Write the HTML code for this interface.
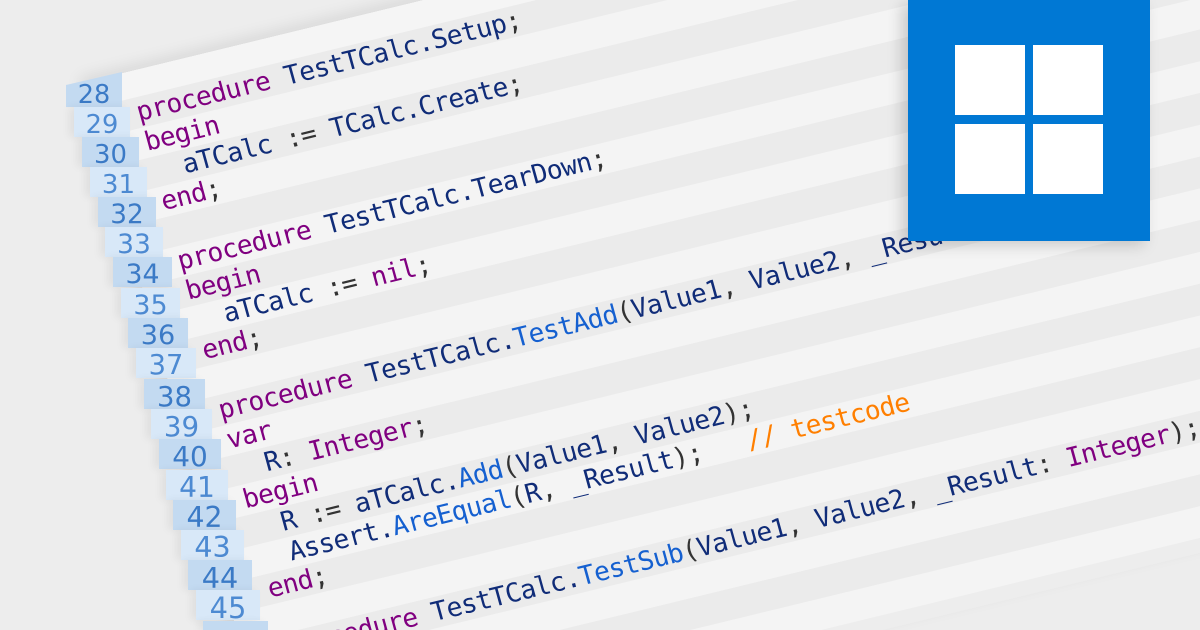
<!DOCTYPE html>
<html><head><meta charset="utf-8"><style>
html,body{margin:0;padding:0;width:1200px;height:630px;overflow:hidden}
body{background:#ededed;position:relative;font-family:"DejaVu Sans Mono","Liberation Mono",monospace}
#panel{position:absolute;left:0;top:0;width:1600px;height:700px;transform-origin:0 0;transform:matrix(1,-0.243,0.273,0.993,132.9,98.1)}
#stripes{position:absolute;left:-40px;top:-26px;width:1600px;height:700px;overflow:hidden;box-shadow:-6px -6px 14px rgba(0,0,0,0.08)}
#stripes div{height:30px;background:#f4f4f4}
#stripes div.d{background:#ebebeb}
#stripes div.t{height:26px;background:#f5f5f5}
#code{position:absolute;left:0;top:0;font-size:25.5px;letter-spacing:-0.6px;line-height:30px;white-space:pre;color:#102c78}
.k{color:#800080}.m{color:#1560d0}.p{color:#333}.c{color:#ff7f00}
.g{position:absolute;height:30.3px;box-sizing:border-box;padding-top:3px;font-family:"DejaVu Sans",sans-serif;line-height:30px;text-align:center;color:#3b7ac6;box-shadow:-5px 0 8px rgba(0,0,0,0.06)}
.g.a{background:#c3daf1}.g.b{background:#d8e8f8;color:#4d8ad2}
#win{position:absolute;left:908px;top:0;width:242px;height:241px;background:#0078d4;box-shadow:-6px 4px 14px rgba(0,0,0,0.18)}
#win i{position:absolute;width:70px;height:70px;background:#fff}
</style></head><body>
<div id="panel">
<div id="stripes">
<div class="t"></div>
<div class="d"></div><div></div><div class="d"></div><div></div><div class="d"></div><div></div><div class="d"></div><div></div><div class="d"></div><div></div><div class="d"></div><div></div><div class="d"></div><div></div><div class="d"></div><div></div><div class="d"></div><div></div><div class="d"></div><div></div><div class="d"></div><div></div>
</div>
<div id="code"><span class="k">procedure</span> TestTCalc.Setup<span class="p">;</span>
<span class="k">begin</span>
  aTCalc <span class="p">:=</span> TCalc.Create<span class="p">;</span>
<span class="k">end</span><span class="p">;</span>

<span class="k">procedure</span> TestTCalc.TearDown<span class="p">;</span>
<span class="k">begin</span>
  aTCalc <span class="p">:=</span> <span class="k">nil</span><span class="p">;</span>
<span class="k">end</span><span class="p">;</span>

<span class="k">procedure</span> TestTCalc.<span class="m">TestAdd</span><span class="p">(</span>Value1<span class="p">,</span> Value2<span class="p">,</span> _Result<span class="p">:</span> <span class="k">Integer</span><span class="p">);</span>
<span class="k">var</span>
  R<span class="p">:</span> <span class="k">Integer</span><span class="p">;</span>
<span class="k">begin</span>
  R <span class="p">:=</span> aTCalc.<span class="m">Add</span><span class="p">(</span>Value1<span class="p">,</span> Value2<span class="p">);</span>
  Assert.<span class="m">AreEqual</span><span class="p">(</span>R<span class="p">,</span> _Result<span class="p">);</span>   <span class="c">// testcode</span>
<span class="k">end</span><span class="p">;</span>

<span class="k">procedure</span> TestTCalc.<span class="m">TestSub</span><span class="p">(</span>Value1<span class="p">,</span> Value2<span class="p">,</span> _Result<span class="p">:</span> <span class="k">Integer</span><span class="p">);</span></div>
</div>
<div class="g a" style="left:66px;top:72px;height:35.3px;padding-top:8px;width:56px;font-size:25.5px;clip-path:polygon(0 13px,100% 0,100% 100%,0 100%)">28</div>
<div class="g b" style="left:74px;top:107px;width:56px;font-size:25.7px">29</div>
<div class="g a" style="left:82px;top:137px;width:57px;font-size:25.9px">30</div>
<div class="g b" style="left:90px;top:167px;width:57px;font-size:26.1px">31</div>
<div class="g a" style="left:98px;top:197px;width:58px;font-size:26.3px">32</div>
<div class="g b" style="left:105px;top:227px;width:58px;font-size:26.5px">33</div>
<div class="g a" style="left:113px;top:257px;width:59px;font-size:26.7px">34</div>
<div class="g b" style="left:121px;top:288px;width:59px;font-size:26.9px">35</div>
<div class="g a" style="left:128px;top:318px;width:60px;font-size:27.1px">36</div>
<div class="g b" style="left:136px;top:348px;width:60px;font-size:27.3px">37</div>
<div class="g a" style="left:144px;top:379px;width:61px;font-size:27.5px">38</div>
<div class="g b" style="left:151px;top:409px;width:61px;font-size:27.7px">39</div>
<div class="g a" style="left:159px;top:439px;width:62px;font-size:27.9px">40</div>
<div class="g b" style="left:166px;top:470px;width:62px;font-size:28.1px">41</div>
<div class="g a" style="left:173px;top:500px;width:63px;font-size:28.3px">42</div>
<div class="g b" style="left:181px;top:530px;width:63px;font-size:28.5px">43</div>
<div class="g a" style="left:188px;top:560px;width:64px;font-size:28.7px">44</div>
<div class="g b" style="left:196px;top:590px;width:64px;font-size:28.9px">45</div>
<div class="g a" style="left:203px;top:621px;width:65px;height:9px;font-size:29px">&nbsp;</div>
<div id="win">
<i style="left:47px;top:45px"></i><i style="left:125px;top:45px"></i>
<i style="left:47px;top:124px"></i><i style="left:125px;top:124px"></i>
</div>
</body></html>
